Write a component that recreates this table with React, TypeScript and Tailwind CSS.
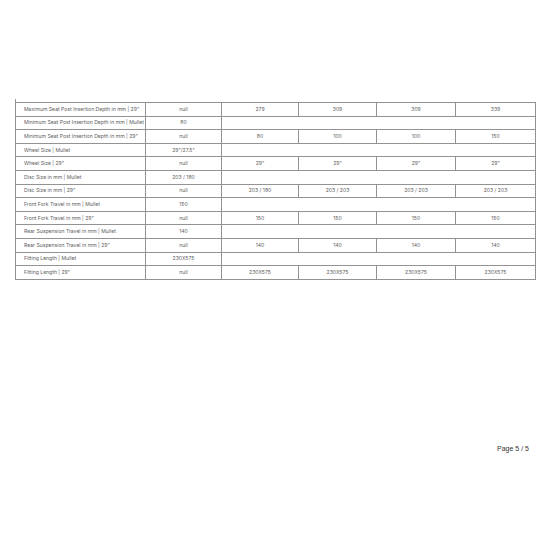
const rows: { label: string; values: string[]; mullet?: boolean }[] = [
  { label: "Maximum Seat Post Insertion Depth in mm | 29\"", values: ["null", "279", "309", "309", "339"] },
  { label: "Minimum Seat Post Insertion Depth in mm | Mullet", values: ["80"], mullet: true },
  { label: "Minimum Seat Post Insertion Depth in mm | 29\"", values: ["null", "80", "100", "100", "150"] },
  { label: "Wheel Size | Mullet", values: ["29\"/27.5\""], mullet: true },
  { label: "Wheel Size | 29\"", values: ["null", "29\"", "29\"", "29\"", "29\""] },
  { label: "Disc Size in mm | Mullet", values: ["203 / 180"], mullet: true },
  { label: "Disc Size in mm | 29\"", values: ["null", "203 / 180", "203 / 203", "203 / 203", "203 / 203"] },
  { label: "Front Fork Travel in mm | Mullet", values: ["150"], mullet: true },
  { label: "Front Fork Travel in mm | 29\"", values: ["null", "150", "150", "150", "150"] },
  { label: "Rear Suspension Travel in mm | Mullet", values: ["140"], mullet: true },
  { label: "Rear Suspension Travel in mm | 29\"", values: ["null", "140", "140", "140", "140"] },
  { label: "Fitting Length | Mullet", values: ["230X575"], mullet: true },
  { label: "Fitting Length | 29\"", values: ["null", "230X575", "230X575", "230X575", "230X575"] },
];

const cell = "border border-[#939393] h-[13.6px] p-0 align-middle";

export default function App() {
  return (
    <div className="w-[550px] h-[550px] bg-white relative font-['Inter','Liberation_Sans',sans-serif] text-[#5e5e5e]">
      <div className="pt-[102px] pl-[15px]">
        <div className="absolute left-[15px] top-[99px] w-px h-[3px] bg-[#939393]" />
        <table className="border-collapse table-fixed w-[520px] text-[5.1px] leading-none">
          <colgroup>
            <col className="w-[130px]" />
            <col className="w-[76px]" />
            <col className="w-[77px]" />
            <col className="w-[78px]" />
            <col className="w-[79px]" />
            <col className="w-[80px]" />
          </colgroup>
          <tbody>
            {rows.map((r, i) => (
              <tr key={i}>
                <td className={`${cell} pl-[8px] text-left whitespace-nowrap overflow-hidden`}>{r.label}</td>
                <td className={`${cell} text-center`}>{r.values[0]}</td>
                {r.mullet ? (
                  <td colSpan={4} className="border-y border-y-[#939393] border-r border-r-[#939393] border-l border-l-[#d4d4d4] p-0" />
                ) : (
                  r.values.slice(1).map((v, j) => (
                    <td key={j} className={`${cell} text-center`}>{v}</td>
                  ))
                )}
              </tr>
            ))}
          </tbody>
        </table>
      </div>
      <div className="absolute left-[497px] top-[444px] text-[7px] text-[#333] font-['Liberation_Sans',Arial,sans-serif]">
        Page 5 / 5
      </div>
    </div>
  );
}
